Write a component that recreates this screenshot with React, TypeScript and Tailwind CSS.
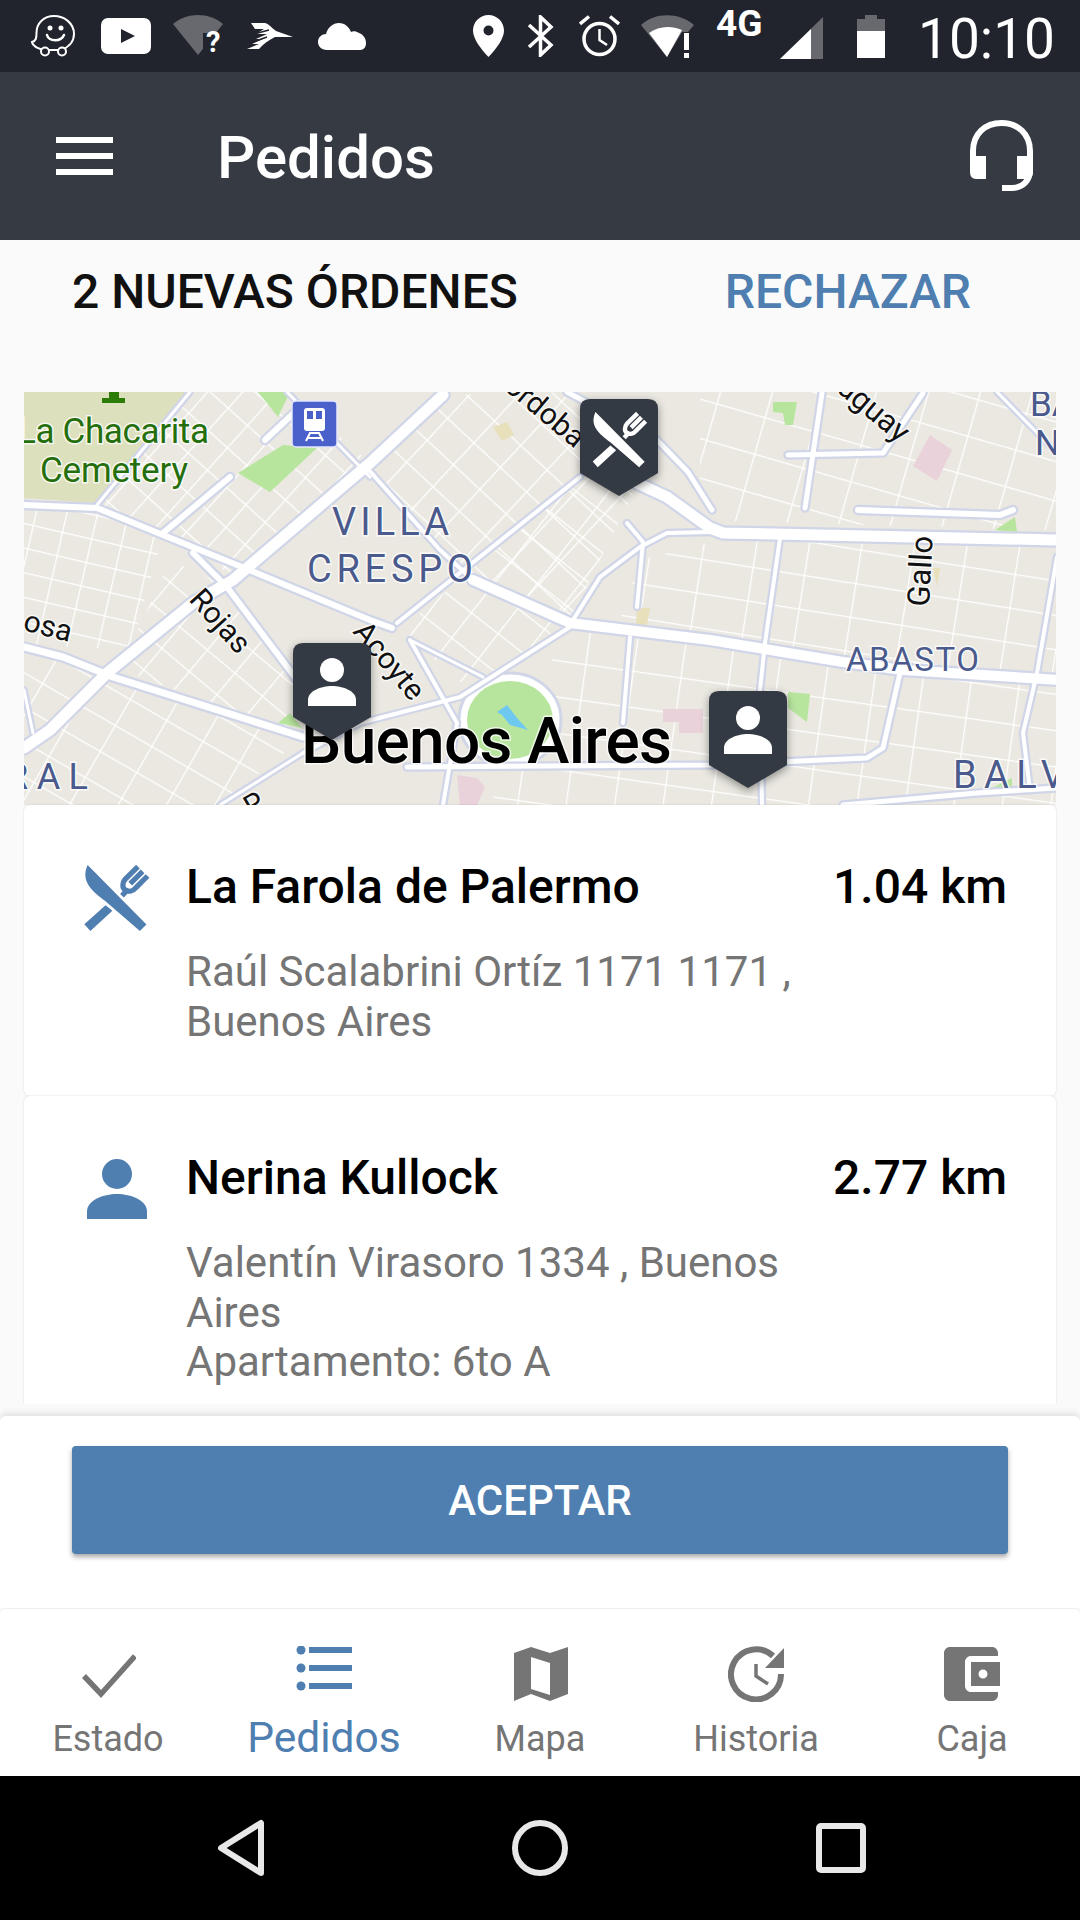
import React from "react";

const ROADS: { w: number; d: string }[] = [
  { w: 3, d: "M190 392L97 505" },
  { w: 3, d: "M287 392L370 477" },
  { w: 3, d: "M24 690L33 733" },
  { w: 3, d: "M410 640L483 677" },
  { w: 3, d: "M303 753L220 805" },
  { w: 3, d: "M997 392L1057 453" },
  { w: 4, d: "M410 640L457 723L443 805" },
  { w: 4, d: "M397 623L580 477" },
  { w: 4, d: "M303 753L360 723L460 697L570 627" },
  { w: 4, d: "M367 468L440 550L473 580" },
  { w: 4, d: "M573 620L600 577L640 547L667 533L710 532" },
  { w: 4, d: "M627 523L643 542L637 607" },
  { w: 4, d: "M630 637L623 723" },
  { w: 4, d: "M780 538L765 643L760 690L762 805" },
  { w: 5, d: "M822 393L805 508" },
  { w: 5, d: "M788 455L883 453L923 393" },
  { w: 4, d: "M1057 557L1037 673L1023 733L1030 790" },
  { w: 5, d: "M567 392L657 440L688 472L712 510" },
  { w: 5, d: "M407 767L710 765L867 758L883 748L900 673" },
  { w: 6, d: "M858 510L1000 515L1013 510" },
  { w: 5, d: "M843 805L977 793L1057 788" },
  { w: 6, d: "M163 533L230 477" },
  { w: 6, d: "M265 440L297 410" },
  { w: 6, d: "M193 553L227 587L297 680" },
  { w: 6, d: "M24 505L97 508L163 535L237 565L370 620L392 628" },
  { w: 7, d: "M24 647L63 657L113 677L303 737" },
  { w: 10, d: "M473 580L570 623L710 640L843 662L903 670L1060 680" },
  { w: 11, d: "M637 483L667 497L710 528L723 533L1060 540" },
  { w: 11, d: "M24 748L50 730L107 673L193 603L233 580L370 463L443 395" },
];

const GRIDS: { id: string; a: number; sx: number; sy: number; pts: string }[] = [
  { id: "g1", a: 13, sx: 30, sy: 24, pts: "24,505 97,510 163,537 130,650 24,645" },
  { id: "g2", a: 30, sx: 42, sy: 30, pts: "24,650 110,680 300,740 220,805 24,805" },
  { id: "g3", a: 42, sx: 26, sy: 30, pts: "97,505 190,392 290,392 370,463 233,575 163,535" },
  { id: "g4", a: 40, sx: 36, sy: 28, pts: "170,560 235,590 300,680 300,735 120,670" },
  { id: "g5", a: 43, sx: 36, sy: 30, pts: "370,470 443,395 580,392 640,480 570,620 473,580" },
  { id: "g6", a: 38, sx: 34, sy: 32, pts: "400,630 580,480 640,480 570,620 470,690" },
  { id: "g7", a: 9, sx: 52, sy: 34, pts: "720,540 1057,545 1057,675 840,660 710,635 620,620 640,560" },
  { id: "g8", a: 8, sx: 48, sy: 36, pts: "570,630 1057,680 1057,805 490,805 540,680" },
  { id: "g9", a: 16, sx: 50, sy: 38, pts: "700,392 1057,392 1057,530 700,520" },
];

const FILLS: { c: string; pts: string }[] = [
  { c: "#dde0bd", pts: "24,392 190,392 97,503 24,498" },
  { c: "#b8e59e", pts: "238,473 283,445 317,448 270,492" },
  { c: "#b8e59e", pts: "258,392 290,392 278,417" },
  { c: "#e9d2da", pts: "930,435 952,450 937,481 913,466" },
  { c: "#e9d2da", pts: "663,709 703,709 703,733 679,733 679,722 663,722" },
  { c: "#e9d2da", pts: "457,775 477,778 485,787 477,805 460,805" },
  { c: "#e8e0bb", pts: "493,427 507,422 514,435 502,441" },
  { c: "#e8e0bb", pts: "637,608 650,608 647,625 636,625" },
  { c: "#e8e0bb", pts: "933,568 940,568 937,587" },
  { c: "#b8e59e", pts: "773,402 797,402 793,425 785,425 783,413 773,412" },
  { c: "#b8e59e", pts: "788,692 810,694 807,722 788,708" },
  { c: "#b8e59e", pts: "995,530 1015,517 1017,532" },
  { c: "#b8e59e", pts: "988,790 1012,778 1012,790" },
  { c: "#b8e59e", pts: "278,723 290,713 302,728" },
];

function Person({ fill }: { fill: string }) {
  return (
    <>
      <circle cx="24" cy="12" r="12" fill={fill} />
      <path d="M0 48V42C0 33 13 28 24 28S48 33 48 42V48Z" fill={fill} />
    </>
  );
}

// crossed knife and fork on a 24 box
function Cutlery({ fill }: { fill: string }) {
  return (
    <>
      <path d="M1.5 0L22.9 21.6L20.5 24L8 13.2C3 9.4 -1.2 6 1.5 0Z" fill={fill} />
      <path d="M.3 21.5L8 14.6L10.5 16.6L2.5 24Z" fill={fill} />
      <path
        d="M19.8.6L15.2 5.1C14 6.5 14 8.5 15.3 9.1C16.5 9.9 18 9.5 19 8.3L23.3 4M21.5 2.3L17 6.8M14 11.2L16 9"
        fill="none"
        stroke={fill}
        strokeWidth="1.9"
      />
    </>
  );
}

function Marker({ x, y, kind }: { x: number; y: number; kind: "food" | "person" }) {
  return (
    <g transform={`translate(${x} ${y})`}>
      <path
        className="drop-shadow-[0_3px_4px_rgba(0,0,0,0.4)]"
        d="M10 0H68Q78 0 78 10V74L39 97L0 74V10Q0 0 10 0Z"
        fill="#343a44"
      />
      {kind === "food" ? (
        <g transform="translate(12 13) scale(2.3)">
          <Cutlery fill="#fff" />
        </g>
      ) : (
        <g transform="translate(15 15)">
          <Person fill="#fff" />
        </g>
      )}
    </g>
  );
}

function MapLabel({ x, y, size, fill, text, len, rot, anchor, weight }: {
  x: number; y: number; size: number; fill: string; text: string; len?: number; rot?: number; anchor?: "end" | "middle"; weight?: number;
}) {
  return (
    <text
      x={x}
      y={y}
      fontSize={size}
      fill={fill}
      fontWeight={weight ?? 400}
      textAnchor={anchor}
      textLength={len}
      transform={rot ? `rotate(${rot} ${x} ${y})` : undefined}
      stroke="#fff"
      strokeWidth="3"
      strokeOpacity="0.75"
      className="[paint-order:stroke]"
    >
      {text}
    </text>
  );
}

function CityMap() {
  return (
    <svg viewBox="24 392 1032 413" className="block h-[413px] w-[1032px] shrink-0 font-[Roboto,sans-serif]">
      <defs>
        {GRIDS.map((g) => (
          <pattern key={g.id} id={g.id} width={g.sx} height={g.sy} patternUnits="userSpaceOnUse" patternTransform={`rotate(${g.a})`}>
            <path d={`M0 0H${g.sx}M0 0V${g.sy}`} stroke="#fff" strokeWidth="2.500" fill="none" />
          </pattern>
        ))}
      </defs>
      <rect x="24" y="392" width="1032" height="413" fill="#eae8e1" />
      {GRIDS.map((g) => (
        <polygon key={g.id} points={g.pts} fill={`url(#${g.id})`} />
      ))}
      {FILLS.map((f) => (
        <polygon key={f.pts} points={f.pts} fill={f.c} />
      ))}
      <ellipse cx="510" cy="720" rx="51" ry="47" fill="#fff" stroke="#d0d5e8" strokeWidth="3" />
      <ellipse cx="510" cy="720" rx="43" ry="39" fill="#b8e59e" />
      <polygon points="497,712 507,705 517,718 528,730 510,725 502,715" fill="#6fc8f0" />
      {ROADS.map((r) => (
        <path key={r.d} d={r.d} fill="none" stroke="#d0d5e8" strokeWidth={r.w + 4.5} strokeLinecap="round" strokeLinejoin="round" />
      ))}
      {ROADS.map((r) => (
        <path key={r.d} d={r.d} fill="none" stroke="#fff" strokeWidth={r.w} strokeLinecap="round" strokeLinejoin="round" />
      ))}

      {/* cemetery pin and station */}
      <path d="M109 392H119V398H125V403H102V398H109Z" fill="#2b7d08" />
      <rect x="292" y="401" width="45" height="46" rx="4" fill="#4a61cc" stroke="#e4e8fa" strokeWidth="1.5" />
      <rect x="304" y="408" width="21" height="23" rx="3" fill="#fff" />
      <rect x="307" y="411" width="6" height="8" fill="#4a61cc" />
      <rect x="316" y="411" width="6" height="8" fill="#4a61cc" />
      <path d="M306 441L310 433H319L323 441M308 438H321" stroke="#fff" strokeWidth="2" fill="none" />

      <MapLabel x={17} y={443} size={35} fill="#246f0c" text="La Chacarita" len={192} />
      <MapLabel x={40} y={482} size={35} fill="#246f0c" text="Cemetery" len={148} />
      <MapLabel x={332} y={535} size={38} fill="#4a5a8c" text="VILLA" len={117} />
      <MapLabel x={307} y={582} size={38} fill="#4a5a8c" text="CRESPO" len={166} />
      <MapLabel x={846} y={671} size={33} fill="#4a5a8c" text="ABASTO" len={133} />
      <MapLabel x={6} y={789} size={36} fill="#4a5a8c" text="RAL" len={82} />
      <MapLabel x={953} y={788} size={38} fill="#4a5a8c" text="BALV" len={112} />
      <MapLabel x={1030} y={416} size={35} fill="#4a5a8c" text="BA" />
      <MapLabel x={1035} y={455} size={35} fill="#4a5a8c" text="N" />
      <MapLabel x={188} y={600} size={30} fill="#111" text="Rojas" rot={48} />
      <MapLabel x={352} y={632} size={30} fill="#111" text="Acoyte" rot={50} />
      <MapLabel x={22} y={630} size={30} fill="#111" text="osa" rot={14} />
      <MapLabel x={575} y={449} size={30} fill="#111" text="Córdoba" rot={40} anchor="end" />
      <MapLabel x={899} y={444} size={31} fill="#111" text="Paraguay" rot={40} anchor="end" />
      <MapLabel x={929} y={607} size={31} fill="#111" text="Gallo" rot={-87} />
      <MapLabel x={251} y={817} size={29} fill="#111" text="P" rot={-30} />
      <MapLabel x={301} y={763} size={64} fill="#000" text="Buenos Aires" len={371} weight={500} />

      <Marker x={580} y={399} kind="food" />
      <Marker x={293} y={643} kind="person" />
      <Marker x={709} y={691} kind="person" />
    </svg>
  );
}

function StatusBar() {
  return (
    <div className="flex h-[72px] shrink-0 items-center bg-[#21242c] pl-[30px]">
      {/* waze */}
      <svg width="46" height="44" viewBox="0 0 46 44" className="shrink-0">
        <path d="M2 28C6 27 6.500 24 6.500 19C6.500 9 14 2 24 2S44 9 44 20C44 29 37 34 31 36H16C11 36 3 33 2 28Z" fill="#21242c" stroke="#fff" strokeWidth="2" />
        <circle cx="15" cy="37.500" r="4" fill="#21242c" stroke="#fff" strokeWidth="2" />
        <circle cx="32" cy="37.500" r="4" fill="#21242c" stroke="#fff" strokeWidth="2" />
        <circle cx="20" cy="14" r="2.500" fill="#fff" />
        <circle cx="31" cy="14" r="2.500" fill="#fff" />
        <path d="M17 21C19 28 31 28 34 21" fill="none" stroke="#fff" strokeWidth="2.500" strokeLinecap="round" />
      </svg>
      {/* youtube */}
      <svg width="50" height="36" viewBox="0 0 50 36" className="ml-[25px] shrink-0">
        <rect width="50" height="36" rx="7" fill="#fff" />
        <path d="M20 11L34 18L20 25Z" fill="#21242c" />
      </svg>
      {/* wifi with question mark */}
      <svg width="50" height="42" viewBox="0 0 50 42" className="ml-[22px] shrink-0">
        <path d="M0 9C14 -3 36 -3 50 9L25 40Z" fill="#68696e" />
        <path d="M30 42V18H50V42Z" fill="#21242c" />
        <text x="33" y="37" fontSize="29" fontWeight="700" fill="#fff" fontFamily="Roboto, sans-serif">?</text>
      </svg>
      {/* airline arrow */}
      <svg width="46" height="28" viewBox="0 0 46 28" className="ml-[24px] shrink-0">
        <path d="M4 1H18C22 2 25 6 29 9L46 15L28 15C22 18 16 22 12 27H0L12 22H5L16 17H9L20 12H9L17 7H8Z" fill="#fff" />
        <path d="M9 11.500L22 8M6 20L20 15" stroke="#21242c" strokeWidth="1.500" />
      </svg>
      {/* cloud */}
      <svg width="48" height="27" viewBox="0 0 48 27" className="ml-[25px] shrink-0">
        <path d="M9 27C3 27 0 23 0 19C0 14 4 11 8 11C10 4 15 0 21 0C27 0 31 4 33 9C35 8 38 8 41 10C46 12 48 16 48 20C48 24 46 27 42 27Z" fill="#fff" />
      </svg>
      {/* location pin */}
      <svg width="31" height="42" viewBox="0 0 31 42" className="ml-[107px] shrink-0">
        <path fillRule="evenodd" d="M15.500 0C24 0 31 7 31 15.500C31 24 23 34 15.500 42C8 34 0 24 0 15.500C0 7 7 0 15.500 0ZM15.500 10.500A5 5 0 1 0 15.500 20.500A5 5 0 1 0 15.500 10.500Z" fill="#fff" />
      </svg>
      {/* bluetooth */}
      <svg width="27" height="42" viewBox="0 0 27 42" className="ml-[23px] shrink-0">
        <path d="M2 10L24 30L13.500 40V2L24 12L2 32" fill="none" stroke="#fff" strokeWidth="3.500" />
      </svg>
      {/* alarm */}
      <svg width="41" height="42" viewBox="0 0 41 42" className="ml-[25px] shrink-0">
        <circle cx="20.500" cy="24" r="15.500" fill="none" stroke="#fff" strokeWidth="3.500" />
        <path d="M20.500 14V25L28 30" fill="none" stroke="#fff" strokeWidth="2.500" />
        <path d="M1 9L10 1.500M40 9L31 1.500" stroke="#fff" strokeWidth="3.500" />
      </svg>
      {/* wifi with alert */}
      <svg width="53" height="43" viewBox="0 0 53 43" className="ml-[21px] shrink-0">
        <path d="M0 10C14 -3 38 -3 53 10L47 17H41L26 42Z" fill="#68696e" />
        <path d="M8 18C17 11 30 10 41 15L26 42Z" fill="#fff" />
        <rect x="43" y="18" width="5" height="17" fill="#fff" />
        <rect x="43" y="38" width="5" height="5" fill="#fff" />
      </svg>
      <div className="mb-[24px] ml-[22px] w-[49px] shrink-0 font-[Roboto,sans-serif] text-[37px] leading-[30px] font-bold text-white">4G</div>
      {/* signal */}
      <svg width="43" height="42" viewBox="0 0 43 42" className="mt-[4px] ml-[15px] shrink-0">
        <path d="M0 42L43 0V42Z" fill="#68696e" />
        <path d="M0 42L31 12V42Z" fill="#fff" />
      </svg>
      {/* battery */}
      <svg width="28" height="43" viewBox="0 0 28 43" className="ml-[34px] shrink-0">
        <path d="M8 0H20V4H28V16H0V4H8Z" fill="#68696e" />
        <rect y="16" width="28" height="27" fill="#fff" />
      </svg>
      <div className="ml-[33px] pt-[6px] font-[Roboto,sans-serif] text-[55px] leading-[66px] text-white">10:10</div>
    </div>
  );
}

function AppBar() {
  return (
    <div className="flex h-[168px] shrink-0 items-center bg-[#363a43] pr-[47px] pl-[56px]">
      <div className="flex w-[57px] flex-col gap-[10px]">
        <div className="h-[6px] bg-white" />
        <div className="h-[6px] bg-white" />
        <div className="h-[6px] bg-white" />
      </div>
      <div className="ml-[104px] flex-1 pt-[4px] font-[Roboto,sans-serif] text-[60px] leading-[68px] font-medium text-white">Pedidos</div>
      <svg width="63" height="72" viewBox="0 0 63 72" className="shrink-0">
        <path d="M3 36V31C3 14 15 3 31.500 3S60 14 60 31V50C60 60 53 68 42 68H32" fill="none" stroke="#fff" strokeWidth="6" />
        <path d="M0 36H16V59H6Q0 59 0 52Z" fill="#fff" />
        <path d="M47 36H63V52Q63 59 57 59H47Z" fill="#fff" />
      </svg>
    </div>
  );
}

function OrderCard({ name, km, lines, icon, h }: { name: string; km: string; lines: string[]; icon: React.ReactNode; h: string }) {
  return (
    <div className={`flex shrink-0 rounded-[6px] bg-white pr-[49px] pl-[59px] shadow-[0_0_2px_rgba(0,0,0,0.16)] ${h}`}>
      <div className="w-[67px] shrink-0 pt-[60px]">{icon}</div>
      <div className="ml-[36px] flex-1 pt-[55px]">
        <div className="flex justify-between text-[48px] leading-[54px] font-medium text-black">
          <span>{name}</span>
          <span>{km}</span>
        </div>
        <div className="mt-[33px] text-[42px] leading-[49.500px] text-[#757575]">
          {lines.map((l) => (
            <div key={l}>{l}</div>
          ))}
        </div>
      </div>
    </div>
  );
}

function NavItem({ label, active, children }: { label: string; active?: boolean; children: React.ReactNode }) {
  return (
    <div className="flex flex-col items-center pt-[37px]">
      <svg width="56" height="56" viewBox="0 0 56 56" className="shrink-0">{children}</svg>
      {active ? (
        <div className="mt-[11px] text-[42.500px] leading-[50px] text-[#4f7eb0]">{label}</div>
      ) : (
        <div className="mt-[14px] text-[36px] leading-[46px] text-[#757575]">{label}</div>
      )}
    </div>
  );
}

export default function App() {
  return (
    <div className="flex h-[1920px] w-[1080px] flex-col overflow-hidden bg-[#fafafa] font-[Roboto,sans-serif]">
      <StatusBar />
      <AppBar />

      <div className="flex h-[152px] shrink-0 items-start justify-between pt-[22px] pr-[109px] pl-[72px] text-[48px] leading-[60px] font-medium">
        <span className="text-[#111]">2 NUEVAS ÓRDENES</span>
        <span className="text-[#4f7eb0]">RECHAZAR</span>
      </div>

      <div className="flex h-[1012px] shrink-0 flex-col overflow-hidden px-[24px]">
        <CityMap />
        <OrderCard
          h="h-[291px]"
          name="La Farola de Palermo"
          km="1.04 km"
          lines={["Raúl Scalabrini Ortíz 1171 1171 ,", "Buenos Aires"]}
          icon={
            <svg width="67" height="66" viewBox="0 0 24 24" className="block">
              <Cutlery fill="#4f7eb0" />
            </svg>
          }
        />
        <OrderCard
          h="h-[330px]"
          name="Nerina Kullock"
          km="2.77 km"
          lines={["Valentín Virasoro 1334 , Buenos", "Aires", "Apartamento: 6to A"]}
          icon={
            <svg width="60" height="60" viewBox="0 0 48 48" className="mt-[3px] ml-[4px] block">
              <Person fill="#4f7eb0" />
            </svg>
          }
        />
      </div>

      <div className="mt-[12px] h-[192px] shrink-0 rounded-t-[6px] bg-white px-[72px] pt-[30px] shadow-[0_-3px_6px_rgba(0,0,0,0.1)]">
        <div className="flex h-[108px] items-center justify-center rounded-[4px] bg-[#4f7eb0] text-[42px] font-medium text-white shadow-[0_3px_5px_rgba(0,0,0,0.35)]">
          ACEPTAR
        </div>
      </div>

      <div className="grid h-[168px] shrink-0 grid-cols-5 rounded-t-[6px] border-t border-[#eeeeee] bg-white">
        <NavItem label="Estado">
          <path d="M4 30L21 48L55 10" fill="none" stroke="#757575" strokeWidth="5.500" />
        </NavItem>
        <NavItem label="Pedidos" active>
          <g fill="#4f7eb0">
            <rect x="13" y="1" width="43" height="6" />
            <rect x="13" y="19" width="43" height="6" />
            <rect x="13" y="37" width="43" height="6" />
            <circle cx="5" cy="4" r="4.500" />
            <circle cx="5" cy="22" r="4.500" />
            <circle cx="5" cy="40" r="4.500" />
          </g>
        </NavItem>
        <NavItem label="Mapa">
          <path fillRule="evenodd" d="M2 7L19 1L38 7L56 1V48L38 55L19 48L2 55ZM19 11V43L38 49V17Z" fill="#757575" />
        </NavItem>
        <NavItem label="Historia">
          <path d="M45 10A25 25 0 1 0 53 28" fill="none" stroke="#757575" strokeWidth="6" />
          <path d="M56 2V22H37Z" fill="#757575" />
          <path d="M28 18V30L40 38" fill="none" stroke="#757575" strokeWidth="3.500" />
        </NavItem>
        <NavItem label="Caja">
          <svg x="0" y="1" width="57" height="54" viewBox="3 3 19 18" preserveAspectRatio="none">
            <path
              fill="#757575"
              d="M21 18v1c0 1.100-.9 2-2 2H5c-1.110 0-2-.9-2-2V5c0-1.100.89-2 2-2h14c1.100 0 2 .9 2 2v1h-9c-1.110 0-2 .9-2 2v8c0 1.100.89 2 2 2h9zm-9-2h10V8H12v8zm4-2.500c-.83 0-1.500-.67-1.500-1.500s.67-1.500 1.500-1.500 1.500.67 1.500 1.500-.67 1.500-1.500 1.500z"
            />
          </svg>
        </NavItem>
      </div>

      <div className="flex h-[144px] shrink-0 items-center justify-center bg-black pl-[3px]">
        <svg width="48" height="58" viewBox="0 0 48 58" className="shrink-0">
          <path d="M44 4V54L4 29Z" fill="none" stroke="#e8e8e8" strokeWidth="6" strokeLinejoin="round" />
        </svg>
        <svg width="58" height="58" viewBox="0 0 58 58" className="ml-[246px] shrink-0">
          <circle cx="29" cy="29" r="25" fill="none" stroke="#e8e8e8" strokeWidth="6" />
        </svg>
        <svg width="50" height="50" viewBox="0 0 50 50" className="ml-[247px] shrink-0">
          <rect x="3" y="3" width="44" height="44" rx="2" fill="none" stroke="#e8e8e8" strokeWidth="6" />
        </svg>
      </div>
    </div>
  );
}
